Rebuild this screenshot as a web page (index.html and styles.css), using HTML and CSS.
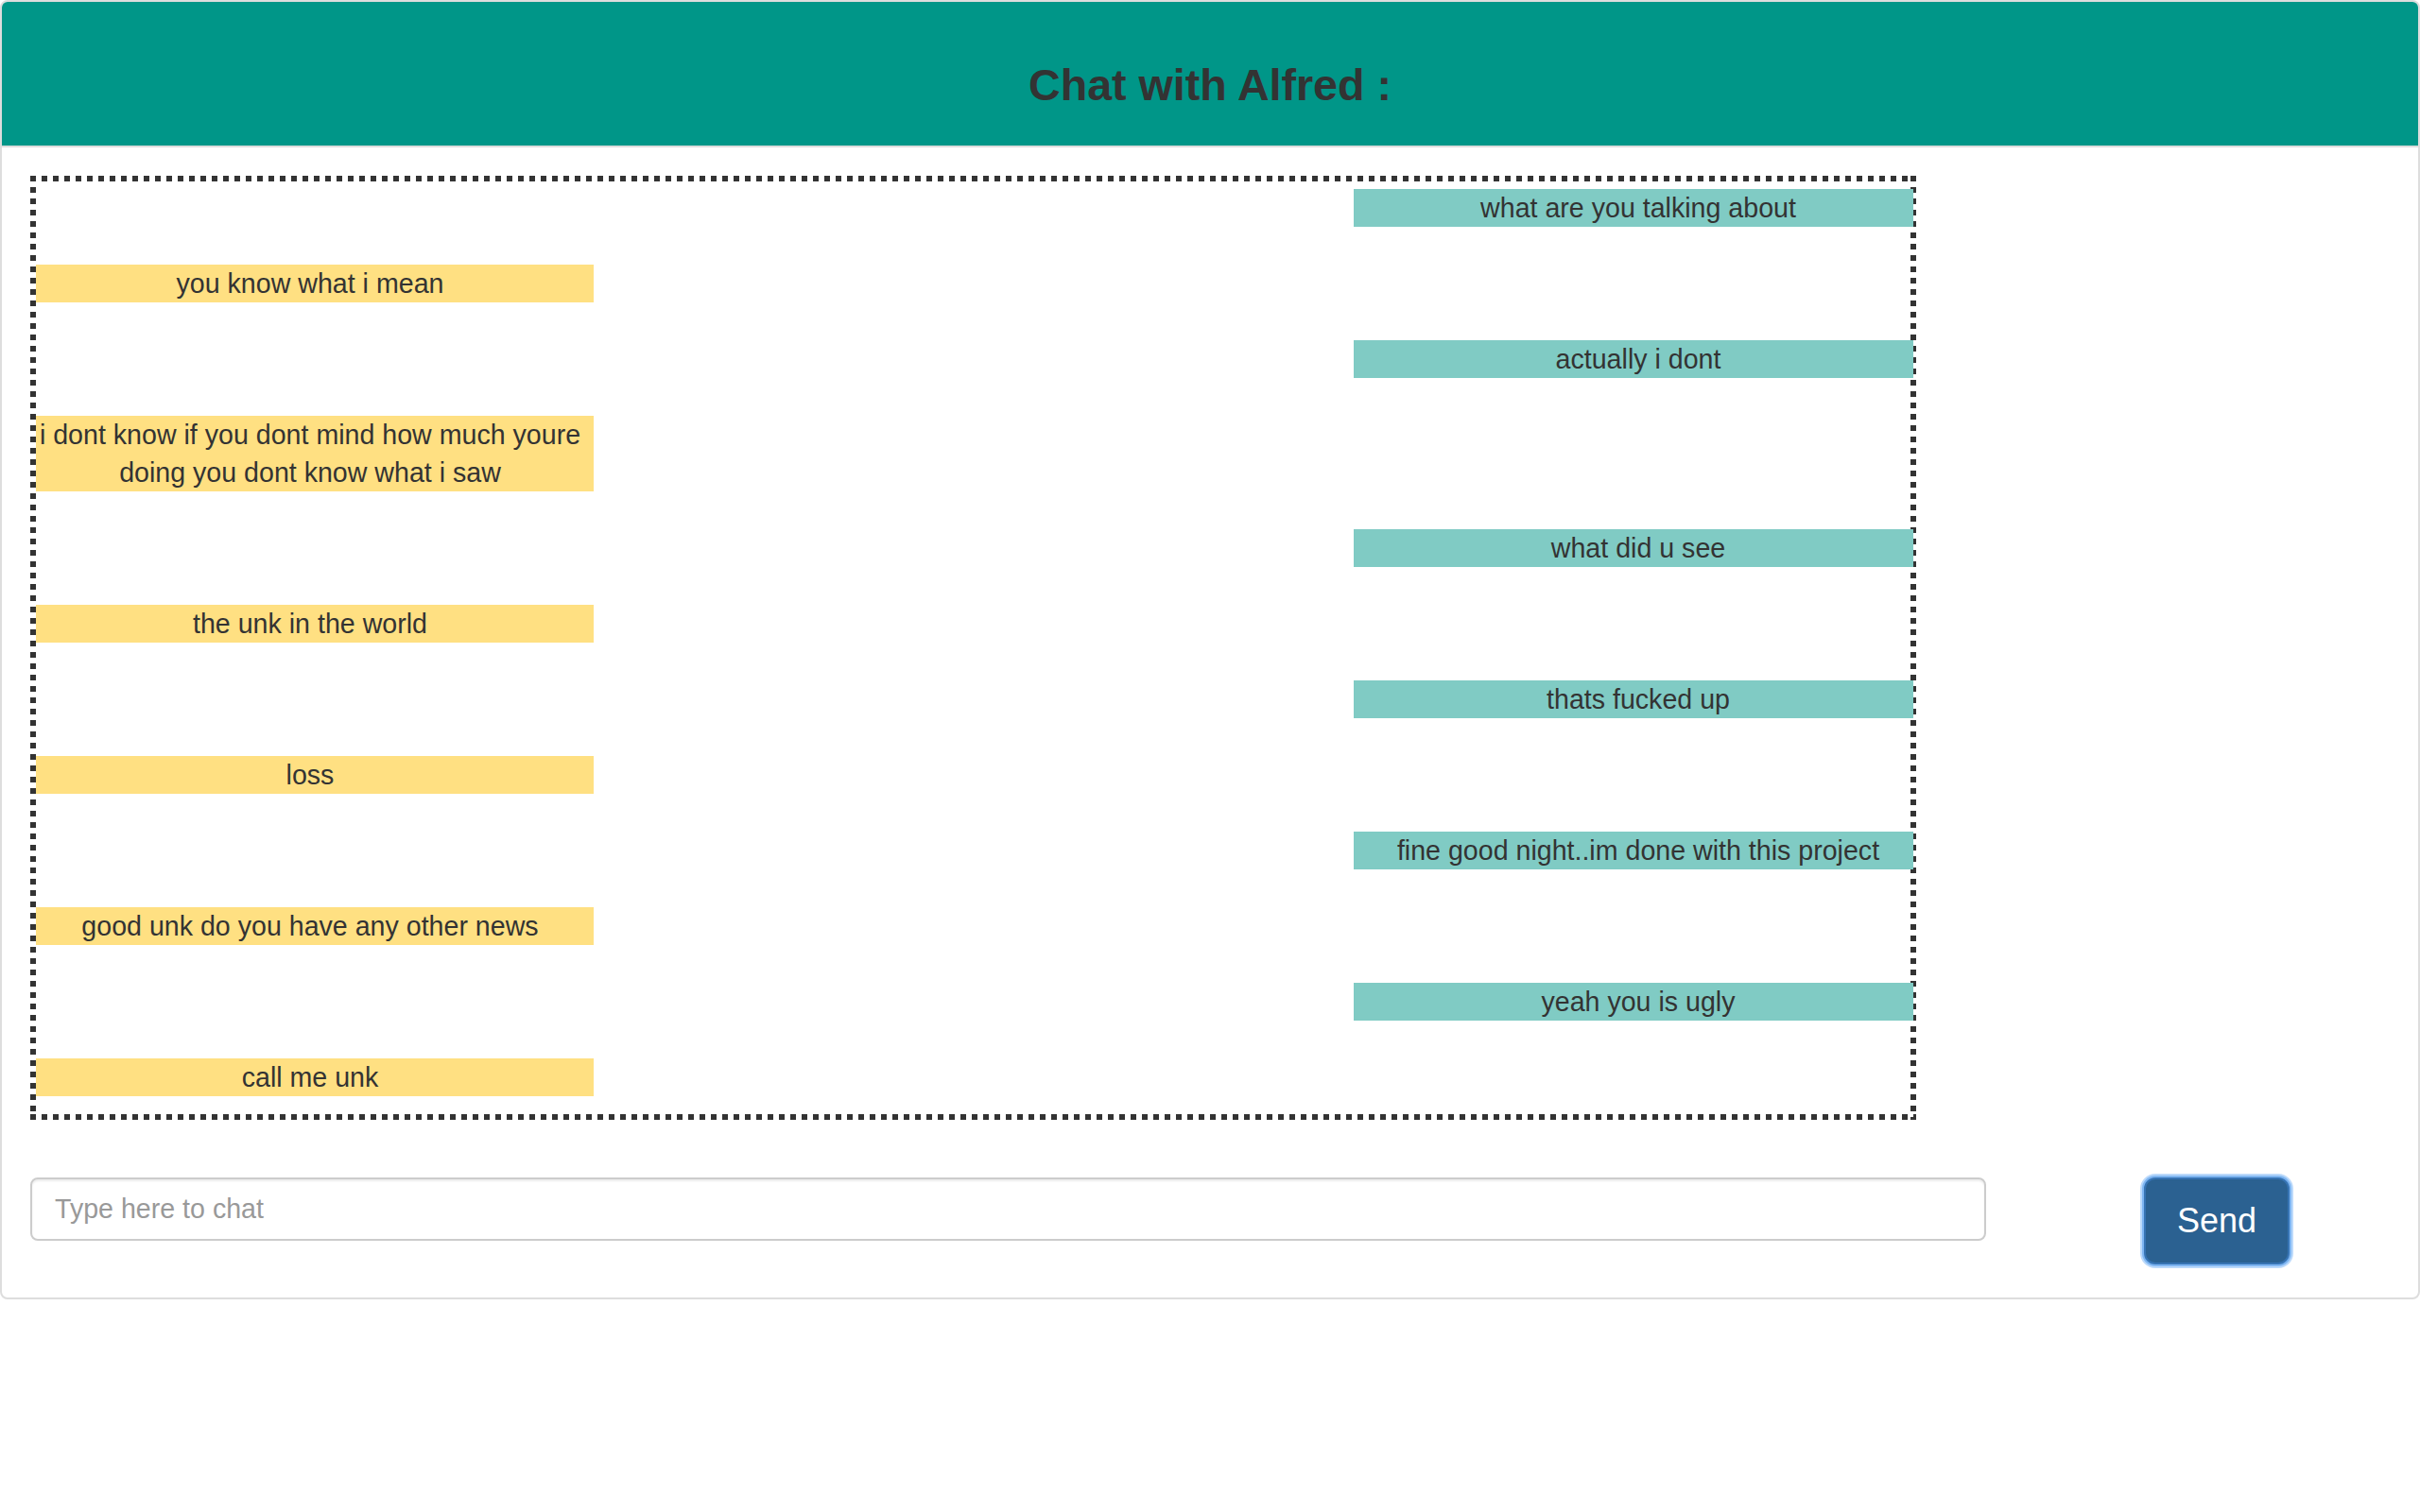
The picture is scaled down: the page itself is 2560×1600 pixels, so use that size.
FILE: index.html
```html
<!DOCTYPE html>
<html lang="en">
<head>
<meta charset="utf-8">
<title>Chat with Alfred</title>
<link rel="stylesheet" href="styles.css">
</head>
<body>
<div class="panel">
  <div class="panel-heading">
    <h1 class="title">Chat with Alfred :</h1>
  </div>
  <div class="panel-body">
    <div class="chat-box">
      <div class="msg msg-right">what are you talking about</div>
      <div class="msg msg-left">you know what i mean</div>
      <div class="msg msg-right">actually i dont</div>
      <div class="msg msg-left">i dont know if you dont mind how much youre doing you dont know what i saw</div>
      <div class="msg msg-right">what did u see</div>
      <div class="msg msg-left">the unk in the world</div>
      <div class="msg msg-right">thats fucked up</div>
      <div class="msg msg-left">loss</div>
      <div class="msg msg-right">fine good night..im done with this project</div>
      <div class="msg msg-left">good unk do you have any other news</div>
      <div class="msg msg-right">yeah you is ugly</div>
      <div class="msg msg-left">call me unk</div>
    </div>
    <div class="input-row">
      <input class="chat-input" type="text" placeholder="Type here to chat">
      <button class="send-btn" type="button">Send</button>
    </div>
  </div>
</div>
</body>
</html>
```
FILE: styles.css
```css
html, body {
  margin: 0;
  padding: 0;
  background: #fff;
  font-family: "Liberation Sans", Arial, Helvetica, sans-serif;
  color: #333;
}

.panel {
  border: 2px solid #ddd;
  border-radius: 8px;
  background: #fff;
}

.panel-heading {
  background: #009688;
  border-bottom: 2px solid #ddd;
  border-radius: 6px 6px 0 0;
  padding: 62px 0 38px;
  text-align: center;
}

.title {
  margin: 0;
  font-size: 46.6px;
  line-height: 52px;
  font-weight: bold;
  color: #333;
}

.panel-body {
  padding: 30px;
}

.chat-box {
  width: 1995px;
  box-sizing: border-box;
  padding: 14px 6px 25px;
  display: flex;
  flex-direction: column;
  gap: 40px;
  background:
    repeating-linear-gradient(90deg, #333 0 6px, transparent 6px 12px) left top / 100% 6px no-repeat,
    repeating-linear-gradient(90deg, #333 0 6px, transparent 6px 12px) left bottom / 100% 6px no-repeat,
    repeating-linear-gradient(180deg, #333 0 6px, transparent 6px 12px) left top / 6px 100% no-repeat,
    repeating-linear-gradient(180deg, #333 0 6px, transparent 6px 12px) right top / 6px 100% no-repeat;
}

.msg {
  box-sizing: border-box;
  font-size: 28.6px;
  line-height: 40px;
  text-align: center;
  color: #333;
}

.msg-left {
  align-self: flex-start;
  width: 590px;
  padding-right: 10px;
  background: #ffe082;
}

.msg-right {
  align-self: flex-end;
  width: 592px;
  margin-right: -3px;
  padding-left: 10px;
  background: #80cbc4;
}

.input-row {
  display: flex;
  align-items: flex-start;
  margin-top: 61px;
  margin-bottom: 5px;
}

.chat-input {
  width: 2069px;
  height: 67px;
  box-sizing: border-box;
  margin: 0;
  border: 2px solid #ccc;
  border-radius: 8px;
  padding: 0 24px;
  font-family: "Liberation Sans", Arial, Helvetica, sans-serif;
  font-size: 28.6px;
  color: #555;
  background: #fff;
  box-shadow: inset 0 2px 2px rgba(0, 0, 0, 0.075);
  outline: none;
}

.chat-input::placeholder {
  color: #999;
}

.send-btn {
  margin: 0 0 0 167px;
  width: 154px;
  height: 92px;
  box-sizing: border-box;
  padding: 0;
  background: #2b6191;
  border: 2px solid #3774b4;
  border-radius: 12px;
  color: #fff;
  font-family: "Liberation Sans", Arial, Helvetica, sans-serif;
  font-size: 36px;
  line-height: 40px;
  box-shadow: 0 0 0 2px #7fb6f2, 0 0 0 4px #bcdafb;
  cursor: pointer;
}
```
